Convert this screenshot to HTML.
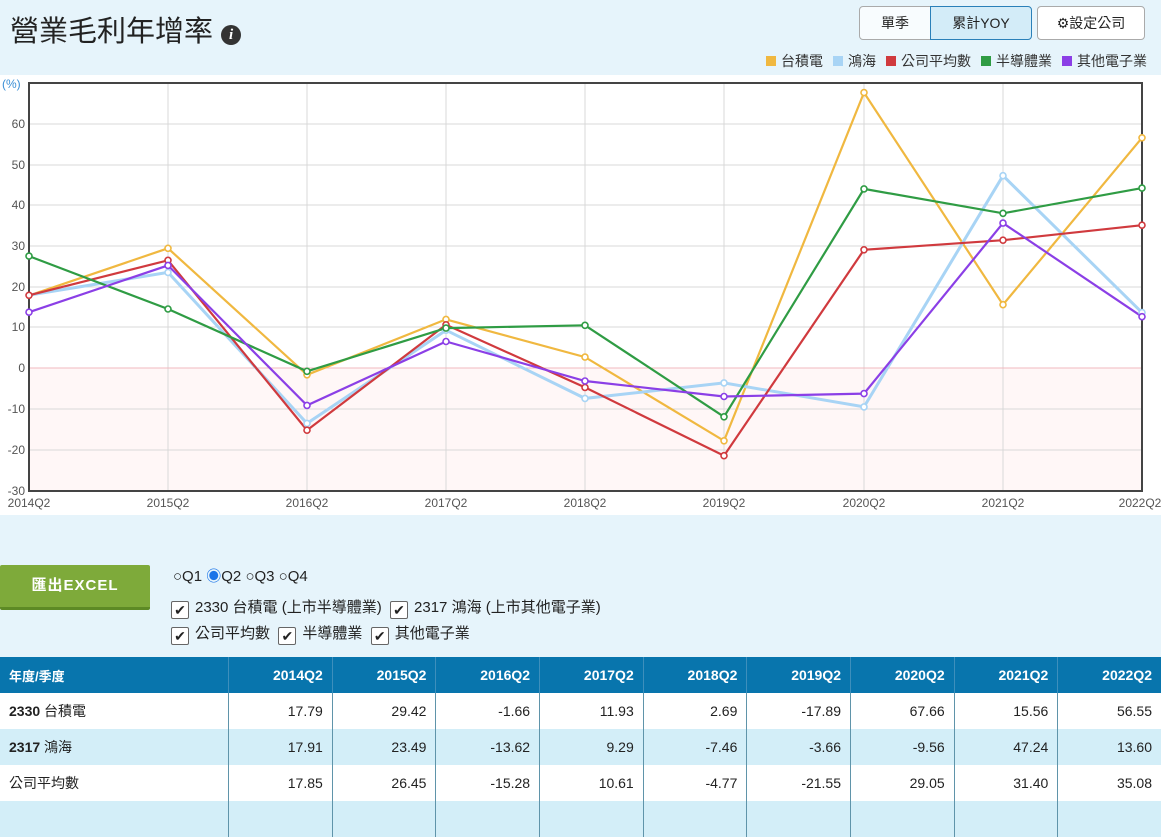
<!DOCTYPE html><html><head><meta charset="utf-8"><style>
body{margin:0;width:1161px;height:804px;background:#e6f4fb;font-family:"Liberation Sans","Noto Sans CJK TC",sans-serif;position:relative;overflow:hidden;color:#222}
.a{position:absolute}
h1{position:absolute;left:10px;top:8px;margin:0;font-size:29px;font-weight:normal;color:#222}
.btn{position:absolute;top:6px;height:34px;border:1px solid #aaa;box-sizing:border-box;font-size:14px;display:flex;align-items:center;justify-content:center;background:#f8fcfe}
.leg{position:absolute;top:51px;right:14px;font-size:14px;color:#333}
.leg span{display:inline-block;width:10px;height:10px;margin:0 5px 0 10px}
table{position:absolute;left:0;top:657px;border-collapse:collapse;font-size:14px}
td,th{height:36px;padding:0 9px;text-align:right;border-left:1px solid #5f94aa;width:85px}
th{background:#0875ad;color:#fff;font-weight:bold;border-left:1px solid #3d8fbc}
td:first-child,th:first-child{text-align:left;width:212px;border-left:none}
tr.o td{background:#d3eef8}tr.w td{background:#fff}
.cb{display:inline-block;width:16px;height:16px;border:1px solid #666;border-radius:2px;background:#fff;vertical-align:-3px;margin-right:6px;text-align:center;line-height:16px;font-size:14px}
</style></head><body>
<h1>營業毛利年增率 <span style="display:inline-block;width:20px;height:20px;border-radius:50%;background:#333;color:#fff;font-size:15px;line-height:20px;text-align:center;font-style:italic;font-weight:bold;font-family:'Liberation Serif',serif;vertical-align:2px">i</span></h1>
<div class="btn" style="left:859px;width:72px;border-radius:4px 0 0 4px">單季</div>
<div class="btn" style="left:930px;width:102px;background:#d3ecf8;border-color:#2a80b9;border-radius:0 4px 4px 0">累計YOY</div>
<div class="btn" style="left:1037px;width:108px;border-radius:4px;background:#fff">⚙設定公司</div>
<div class="leg"><span style="background:#f0b840"></span>台積電<span style="background:#a8d4f5"></span>鴻海<span style="background:#d03a3e"></span>公司平均數<span style="background:#2f9c44"></span>半導體業<span style="background:#8b3fe6"></span>其他電子業</div>
<svg class="a" style="left:0;top:75px" width="1161" height="440" viewBox="0 75 1161 440">
<rect x="0" y="75" width="1161" height="440" fill="#fff"/>
<rect x="29" y="368" width="1113" height="123" fill="#fff7f7"/>
<g stroke="#d8d8d8" stroke-width="1">
<line x1="29" x2="1142" y1="124" y2="124"/><line x1="29" x2="1142" y1="165" y2="165"/><line x1="29" x2="1142" y1="205" y2="205"/><line x1="29" x2="1142" y1="246" y2="246"/><line x1="29" x2="1142" y1="287" y2="287"/><line x1="29" x2="1142" y1="327" y2="327"/><line x1="29" x2="1142" y1="409" y2="409"/><line x1="29" x2="1142" y1="450" y2="450"/>
<line y1="83" y2="491" x1="168" x2="168"/><line y1="83" y2="491" x1="307" x2="307"/><line y1="83" y2="491" x1="446" x2="446"/><line y1="83" y2="491" x1="585" x2="585"/><line y1="83" y2="491" x1="724" x2="724"/><line y1="83" y2="491" x1="864" x2="864"/><line y1="83" y2="491" x1="1003" x2="1003"/></g>
<line x1="29" x2="1142" y1="368" y2="368" stroke="#f0b8bf"/>
<rect x="29" y="83" width="1113" height="408" fill="none" stroke="#444" stroke-width="2"/>
<g font-size="12" fill="#555" text-anchor="end"><text x="25" y="128">60</text><text x="25" y="169">50</text><text x="25" y="209">40</text><text x="25" y="250">30</text><text x="25" y="291">20</text><text x="25" y="331">10</text><text x="25" y="372">0</text><text x="25" y="413">-10</text><text x="25" y="454">-20</text><text x="25" y="495">-30</text></g>
<text x="2" y="88" font-size="12" fill="#3a8fd6">(%)</text>
<g font-size="12" fill="#555" text-anchor="middle"><text x="29" y="507">2014Q2</text><text x="168" y="507">2015Q2</text><text x="307" y="507">2016Q2</text><text x="446" y="507">2017Q2</text><text x="585" y="507">2018Q2</text><text x="724" y="507">2019Q2</text><text x="864" y="507">2020Q2</text><text x="1003" y="507">2021Q2</text><text x="1140" y="507">2022Q2</text></g>
<g fill="none" stroke-width="2.2">
<polyline stroke="#f0b840" points="29,295.6 168,248.3 307,374.8 446,319.4 585,357.1 724,440.8 864,92.6 1003,304.7 1142,137.8"/>
<polyline stroke="#a8d4f5" stroke-width="3" points="29,295.1 168,272.4 307,423.4 446,330.2 585,398.4 724,382.9 864,406.9 1003,175.7 1142,312.6"/>
<polyline stroke="#d03a3e" points="29,295.3 168,260.3 307,430.2 446,324.8 585,387.4 724,455.7 864,249.8 1003,240.2 1142,225.2"/>
<polyline stroke="#2f9c44" points="29,256.1 168,309 307,371.3 446,328.1 585,325.3 724,416.8 864,188.9 1003,213.3 1142,188.1"/>
<polyline stroke="#8b3fe6" points="29,312.2 168,265.4 307,405.4 446,341.5 585,381 724,396.5 864,393.6 1003,223.1 1142,316.7"/>
</g>
<g fill="#fff" stroke-width="1.6">
<g stroke="#f0b840"><circle cx="168" cy="248.3" r="3"/><circle cx="307" cy="374.8" r="3"/><circle cx="446" cy="319.4" r="3"/><circle cx="585" cy="357.1" r="3"/><circle cx="724" cy="440.8" r="3"/><circle cx="864" cy="92.6" r="3"/><circle cx="1003" cy="304.7" r="3"/><circle cx="1142" cy="137.8" r="3"/></g>
<g stroke="#a8d4f5"><circle cx="168" cy="272.4" r="3"/><circle cx="307" cy="423.4" r="3"/><circle cx="446" cy="330.2" r="3"/><circle cx="585" cy="398.4" r="3"/><circle cx="724" cy="382.9" r="3"/><circle cx="864" cy="406.9" r="3"/><circle cx="1003" cy="175.7" r="3"/><circle cx="1142" cy="312.6" r="3"/></g>
<g stroke="#d03a3e"><circle cx="29" cy="295.3" r="3"/><circle cx="168" cy="260.3" r="3"/><circle cx="307" cy="430.2" r="3"/><circle cx="446" cy="324.8" r="3"/><circle cx="585" cy="387.4" r="3"/><circle cx="724" cy="455.7" r="3"/><circle cx="864" cy="249.8" r="3"/><circle cx="1003" cy="240.2" r="3"/><circle cx="1142" cy="225.2" r="3"/></g>
<g stroke="#2f9c44"><circle cx="29" cy="256.1" r="3"/><circle cx="168" cy="309" r="3"/><circle cx="307" cy="371.3" r="3"/><circle cx="446" cy="328.1" r="3"/><circle cx="585" cy="325.3" r="3"/><circle cx="724" cy="416.8" r="3"/><circle cx="864" cy="188.9" r="3"/><circle cx="1003" cy="213.3" r="3"/><circle cx="1142" cy="188.1" r="3"/></g>
<g stroke="#8b3fe6"><circle cx="29" cy="312.2" r="3"/><circle cx="168" cy="265.4" r="3"/><circle cx="307" cy="405.4" r="3"/><circle cx="446" cy="341.5" r="3"/><circle cx="585" cy="381" r="3"/><circle cx="724" cy="396.5" r="3"/><circle cx="864" cy="393.6" r="3"/><circle cx="1003" cy="223.1" r="3"/><circle cx="1142" cy="316.7" r="3"/></g>
</g></svg>
<div class="a" style="left:0;top:565px;width:150px;height:42px;background:#7eaa3a;border-bottom:3px solid #5d8a25;border-radius:2px;color:#fff;font-weight:bold;font-size:15px;line-height:42px;text-align:center;letter-spacing:1px">匯出EXCEL</div>
<div class="a" style="left:173px;top:565px;font-size:15px">○Q1 <span style="color:#1a73e8">◉</span>Q2 ○Q3 ○Q4</div>
<div class="a" style="left:171px;top:596px;font-size:15px"><span class="cb">✔</span>2330 台積電 (上市半導體業) &nbsp;<span class="cb">✔</span>2317 鴻海 (上市其他電子業)</div>
<div class="a" style="left:171px;top:622px;font-size:15px"><span class="cb">✔</span>公司平均數 &nbsp;<span class="cb">✔</span>半導體業 &nbsp;<span class="cb">✔</span>其他電子業</div>
<table>
<tr><th style="font-size:13px">年度/季度</th><th>2014Q2</th><th>2015Q2</th><th>2016Q2</th><th>2017Q2</th><th>2018Q2</th><th>2019Q2</th><th>2020Q2</th><th>2021Q2</th><th>2022Q2</th></tr>
<tr class="w"><td><b>2330</b> 台積電</td><td>17.79</td><td>29.42</td><td>-1.66</td><td>11.93</td><td>2.69</td><td>-17.89</td><td>67.66</td><td>15.56</td><td>56.55</td></tr>
<tr class="o"><td><b>2317</b> 鴻海</td><td>17.91</td><td>23.49</td><td>-13.62</td><td>9.29</td><td>-7.46</td><td>-3.66</td><td>-9.56</td><td>47.24</td><td>13.60</td></tr>
<tr class="w"><td>公司平均數</td><td>17.85</td><td>26.45</td><td>-15.28</td><td>10.61</td><td>-4.77</td><td>-21.55</td><td>29.05</td><td>31.40</td><td>35.08</td></tr>
<tr class="o"><td>&nbsp;</td><td></td><td></td><td></td><td></td><td></td><td></td><td></td><td></td><td></td></tr>
</table>
</body></html>
